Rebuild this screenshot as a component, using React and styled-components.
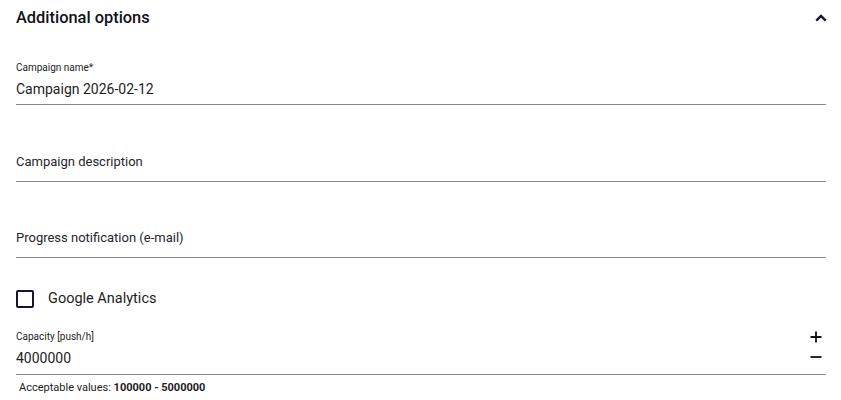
import React from "react";
import styled, { createGlobalStyle } from "styled-components";

const Global = createGlobalStyle`
  html, body { margin: 0; padding: 0; background: #fff; }
  body { font-family: Roboto, "Liberation Sans", sans-serif; color: #1d1d24; }
`;

const Panel = styled.section`
  width: 841px;
  height: 400px;
  padding: 0 15px 0 16px;
  box-sizing: border-box;
  display: flex;
  flex-direction: column;
`;

const Header = styled.div`
  height: 36px;
  display: flex;
  align-items: center;
  justify-content: space-between;
`;

const Title = styled.h2`
  margin: 0;
  font-size: 16.4px;
  font-weight: 500;
  color: #111118;
  line-height: 20px;
`;

const IconButton = styled.button`
  border: 0;
  background: none;
  padding: 0;
  width: ${(p) => p.$w || 12}px;
  height: ${(p) => p.$w || 12}px;
  display: flex;
  align-items: center;
  justify-content: center;
  cursor: pointer;
  color: #14143a;
  margin-right: ${(p) => p.$mr || 0}px;
`;

const Field = styled.div`
  height: ${(p) => p.$h}px;
  padding-bottom: ${(p) => p.$pb}px;
  box-sizing: border-box;
  border-bottom: 1px solid #8a8a8a;
  display: flex;
  align-items: flex-end;
  justify-content: space-between;
`;

const FieldBody = styled.div`
  display: flex;
  flex-direction: column;
  gap: ${(p) => p.$gap || 0}px;
`;

const Label = styled.label`
  font-size: 10px;
  line-height: 12px;
  color: #1d1d24;
`;

const Value = styled.div`
  font-size: ${(p) => (p.$placeholder ? 13 : 14)}px;
  line-height: 20px;
  color: ${(p) => (p.$placeholder ? "#26262c" : "#1d1d24")};
`;

const Stepper = styled.div`
  display: flex;
  flex-direction: column;
  gap: 8px;
  padding-bottom: 5px;
  margin-right: 4px;
`;

const CheckRow = styled.label`
  display: flex;
  align-items: center;
  gap: 14px;
  margin-top: 32px;
  height: 18px;
  cursor: pointer;
`;

const Box = styled.span`
  width: 18px;
  height: 18px;
  box-sizing: border-box;
  border: 2px solid #14143a;
  border-radius: 2px;
  display: inline-block;
`;

const CheckText = styled.span`
  font-size: 14.5px;
  line-height: 18px;
  color: #1d1d24;
`;

const Hint = styled.div`
  margin-top: 6px;
  padding-left: 3px;
  font-size: 11px;
  line-height: 14px;
  color: #1d1d24;
  b { font-weight: 700; }
`;

const Chevron = () => (
  <svg width="12" height="8" viewBox="0 0 12 8" fill="none">
    <path d="M1.3 6.7 L6 2 L10.7 6.7" stroke="currentColor" strokeWidth="2.4" />
  </svg>
);

const Plus = () => (
  <svg width="12" height="12" viewBox="0 0 12 12">
    <path d="M6 0.5V11.5M0.5 6H11.5" stroke="#111" strokeWidth="1.8" />
  </svg>
);

const Minus = () => (
  <svg width="12" height="12" viewBox="0 0 12 12">
    <path d="M0.5 6H11.5" stroke="#111" strokeWidth="1.8" />
  </svg>
);

export default function App() {
  return (
    <>
      <Global />
      <Panel>
        <Header>
          <Title>Additional options</Title>
          <IconButton $w={14} $mr={-2} aria-label="collapse">
            <Chevron />
          </IconButton>
        </Header>
        <Field $h={69} $pb={5}>
          <FieldBody $gap={5}>
            <Label>Campaign name*</Label>
            <Value>Campaign 2026-02-12</Value>
          </FieldBody>
        </Field>
        <Field $h={77} $pb={9}>
          <Value $placeholder>Campaign description</Value>
        </Field>
        <Field $h={76} $pb={9}>
          <Value $placeholder>Progress notification (e-mail)</Value>
        </Field>
        <CheckRow>
          <Box />
          <CheckText>Google Analytics</CheckText>
        </CheckRow>
        <Field $h={67} $pb={6}>
          <FieldBody $gap={5}>
            <Label>Capacity [push/h]</Label>
            <Value>4000000</Value>
          </FieldBody>
          <Stepper>
            <IconButton aria-label="increase"><Plus /></IconButton>
            <IconButton aria-label="decrease"><Minus /></IconButton>
          </Stepper>
        </Field>
        <Hint>
          Acceptable values: <b>100000 - 5000000</b>
        </Hint>
      </Panel>
    </>
  );
}
